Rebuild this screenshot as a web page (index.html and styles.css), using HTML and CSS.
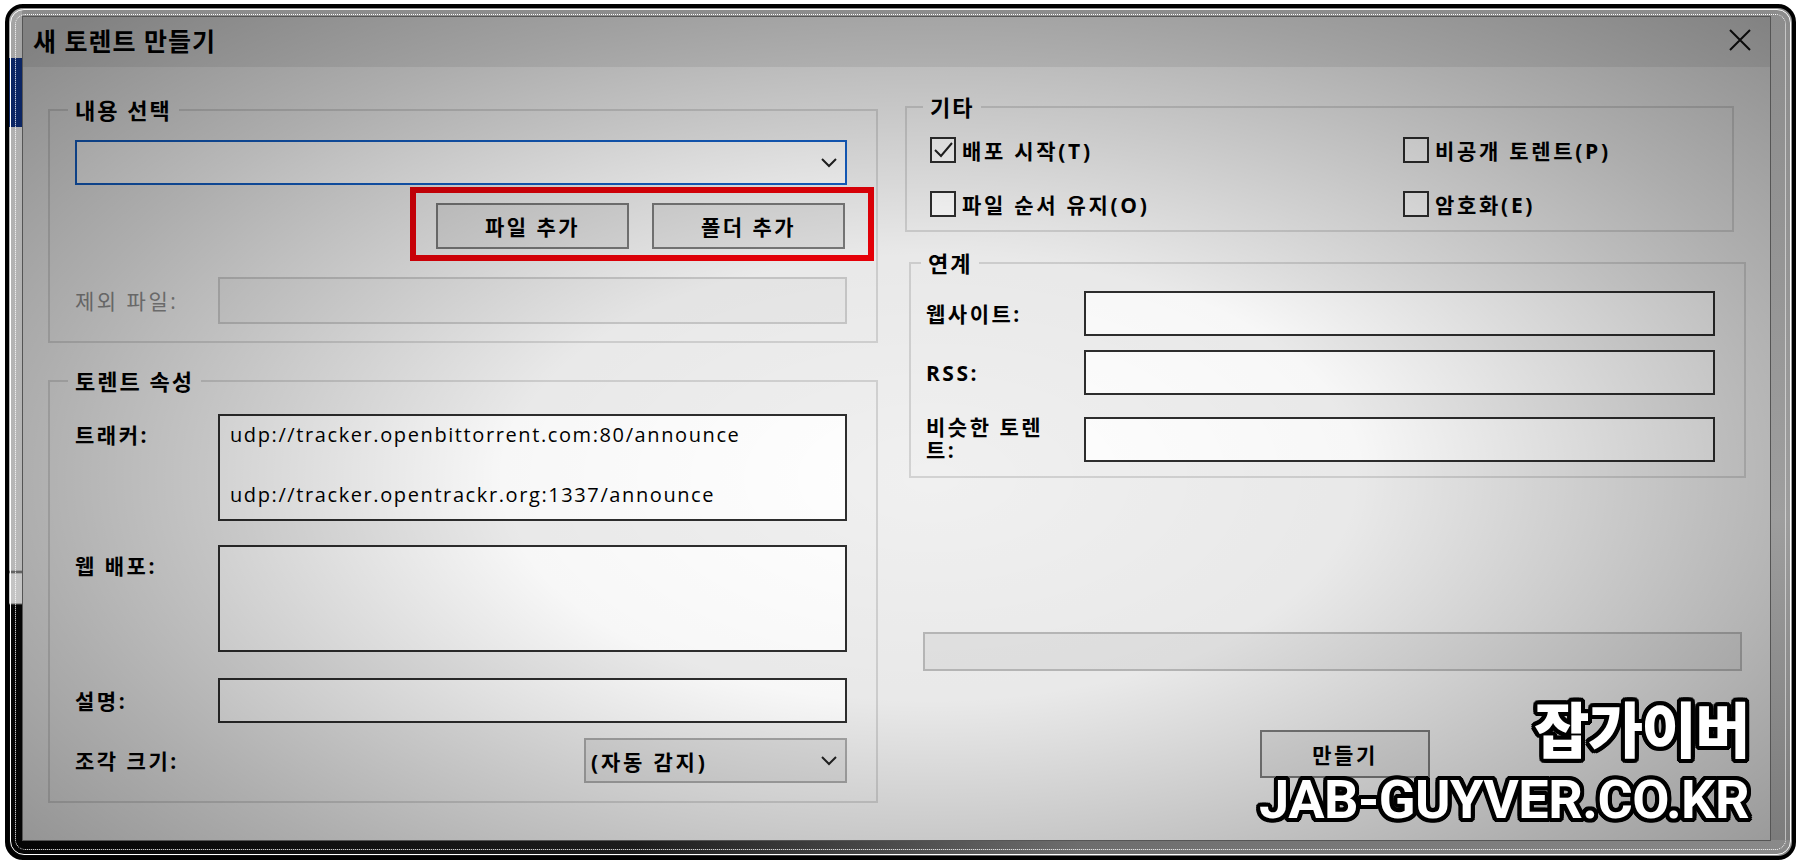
FILE: index.html
```html
<!DOCTYPE html>
<html lang="ko">
<head>
    <meta charset="UTF-8">
    <meta name="viewport" content="width=device-width, initial-scale=1.0">
    <title>새 토렌트 만들기</title>
    <link rel="stylesheet" href="styles.css">
</head>
<body>
    <div class="frame">
        <div class="dialog">
            <div class="titlebar">
                <span class="title">새 토렌트 만들기</span>
                <svg class="close" width="24" height="24" viewBox="0 0 24 24">
                    <path d="M2 2 L22 22 M22 2 L2 22" stroke="#111" stroke-width="2" fill="none"/>
                </svg>
            </div>

            <div class="content">
                <!-- 왼쪽 -->
                <div class="col">
                    <fieldset class="group">
                        <legend>내용 선택</legend>
                        <div class="group-body body-source">
                            <div class="combo">
                                <svg width="16" height="10" viewBox="0 0 16 10"><polyline points="1,1 8,8 15,1" fill="none" stroke="#222" stroke-width="2"/></svg>
                            </div>
                            <div class="add-buttons">
                                <button class="btn">파일 추가</button>
                                <button class="btn">폴더 추가</button>
                            </div>
                            <div class="row row-exclude">
                                <span class="label muted">제외 파일:</span>
                                <div class="input disabled"></div>
                            </div>
                        </div>
                    </fieldset>

                    <fieldset class="group group-props">
                        <legend>토렌트 속성</legend>
                        <div class="group-body body-props">
                            <div class="row row-top">
                                <span class="label">트래커:</span>
                                <div class="textarea trackers">udp://tracker.openbittorrent.com:80/announce<br><br>udp://tracker.opentrackr.org:1337/announce</div>
                            </div>
                            <div class="row row-top row-webseed">
                                <span class="label">웹 배포:</span>
                                <div class="textarea"></div>
                            </div>
                            <div class="row row-comment">
                                <span class="label">설명:</span>
                                <div class="input"></div>
                            </div>
                            <div class="row row-piece">
                                <span class="label">조각 크기:</span>
                                <div class="select">
                                    <span>(자동 감지)</span>
                                    <svg width="16" height="10" viewBox="0 0 16 10"><polyline points="1,1 8,8 15,1" fill="none" stroke="#222" stroke-width="2"/></svg>
                                </div>
                            </div>
                        </div>
                    </fieldset>
                </div>

                <!-- 오른쪽 -->
                <div class="col">
                    <fieldset class="group group-misc">
                        <legend>기타</legend>
                        <div class="group-body checks">
                            <label class="check"><span class="box"><svg width="22" height="22" viewBox="0 0 22 22"><path d="M3 11 L9 17 L20 4" fill="none" stroke="#222" stroke-width="2"/></svg></span>배포 시작(T)</label>
                            <label class="check"><span class="box"></span>비공개 토렌트(P)</label>
                            <label class="check"><span class="box"></span>파일 순서 유지(O)</label>
                            <label class="check"><span class="box"></span>암호화(E)</label>
                        </div>
                    </fieldset>

                    <fieldset class="group group-links">
                        <legend>연계</legend>
                        <div class="group-body body-links">
                            <div class="row link-row">
                                <span class="label">웹사이트:</span>
                                <div class="input"></div>
                            </div>
                            <div class="row link-row">
                                <span class="label">RSS:</span>
                                <div class="input"></div>
                            </div>
                            <div class="row link-row row-similar">
                                <span class="label label-wrap">비슷한 토렌트:</span>
                                <div class="input"></div>
                            </div>
                        </div>
                    </fieldset>

                    <div class="progress"></div>
                    <button class="btn btn-create">만들기</button>
                </div>
            </div>

            <div class="watermark">
                <div class="wm-ko">잡가이버</div>
                <div class="wm-en">JAB-GUYVER.CO.KR</div>
            </div>
        </div>
    </div>
</body>
</html>
```

FILE: styles.css
```css
* {
    box-sizing: border-box;
}
body {
    margin: 0;
    background: #fff;
    font-family: "Open Sans", "Noto Sans CJK KR", sans-serif;
    color: #000;
}

/* 캡처 테두리 */
.frame {
    position: relative;
    width: 1791px;
    height: 856px;
    margin: 4px 0 0 5px;
    padding: 8px 21px 15px 13px;
    border: 4px solid #000;
    border-radius: 18px;
    overflow: hidden;
    background:
        linear-gradient(to bottom, #a4a4a4 0, #a4a4a4 50px, #0b2563 50px, #0b2563 119px, #b0b0b0 119px, #b8b8b8 562px, #444 564px, #c4c4c4 566px, #c4c4c4 595px, #050505 597px, #050505 100%) left top / 13px 100% no-repeat,
        linear-gradient(to right, #050505, #1c1c1c 35%, #6d6d6d 60%, #8a8a8a) left bottom / 100% 16px no-repeat,
        linear-gradient(to bottom, #8c8c8c, #9e9e9e 60%, #7a7a7a);
}
.frame::before,
.frame::after {
    content: "";
    position: absolute;
    z-index: 3;
    pointer-events: none;
}
.frame::before {
    inset: 1px;
    border: 1px solid #fff;
    border-radius: 14px;
}
.frame::after {
    inset: 6px;
    border: 1px dotted #fff;
    border-radius: 10px;
}

/* 대화상자 */
.dialog {
    position: relative;
    height: 100%;
    display: flex;
    flex-direction: column;
    background: #f0f0f0;
    border: 1px solid #555;
    overflow: hidden;
}
.dialog::after {
    content: "";
    position: absolute;
    inset: 0;
    pointer-events: none;
    background: radial-gradient(ellipse 70% 78% at 52% 56%, rgba(0, 0, 0, 0) 0%, rgba(0, 0, 0, 0.03) 35%, rgba(0, 0, 0, 0.28) 75%, rgba(0, 0, 0, 0.42) 100%);
}
.titlebar {
    height: 50px;
    flex: none;
    display: flex;
    align-items: center;
    justify-content: space-between;
    padding: 0 18px 4px 10px;
    background: #dedede;
}
.title {
    font-size: 25px;
    font-weight: 700;
    letter-spacing: 1px;
}
.content {
    display: grid;
    grid-template-columns: 830px 847px;
    column-gap: 27px;
    padding: 28px 18px 0 25px;
}
.col {
    display: flex;
    flex-direction: column;
}

/* 그룹 상자 */
.group {
    margin: 0;
    padding: 0;
    min-width: 0;
    border: 2px solid #d2d2d2;
}
.group legend {
    margin-left: 18px;
    padding: 0 7px;
    font-size: 22px;
    font-weight: 700;
    line-height: 30px;
    letter-spacing: 2px;
}
.group-body {
    display: flex;
    flex-direction: column;
}
.body-source {
    padding: 15px 29px 17px 25px;
}
.group-props {
    margin-top: 23px;
}
.body-props {
    padding: 18px 29px 18px 25px;
}

.row {
    display: grid;
    grid-template-columns: 143px 1fr;
    align-items: center;
}
.row-top {
    align-items: start;
}
.row-top .label {
    padding-top: 6px;
}
.label {
    font-size: 21px;
    font-weight: 700;
    line-height: 30px;
    letter-spacing: 2.5px;
}
.muted {
    color: #8b8b8b;
    font-weight: 400;
}

/* 입력 상자 */
.combo {
    height: 45px;
    display: flex;
    align-items: center;
    justify-content: flex-end;
    padding-right: 8px;
    background: #fff;
    border: 2px solid #1461c9;
}
.input {
    height: 45px;
    background: #fff;
    border: 2px solid #2e2e2e;
}
.input.disabled {
    height: 47px;
    background: #ebebeb;
    border-color: #c9c9c9;
}
.textarea {
    height: 107px;
    background: #fff;
    border: 2px solid #2e2e2e;
}
.trackers {
    padding: 4px 10px;
    font-size: 20px;
    line-height: 30px;
    letter-spacing: 1.6px;
}
.select {
    width: 263px;
    height: 45px;
    justify-self: end;
    display: flex;
    align-items: center;
    justify-content: space-between;
    padding: 0 8px 0 5px;
    background: #e1e1e1;
    border: 2px solid #a9a9a9;
    font-size: 21px;
    font-weight: 700;
    letter-spacing: 2.8px;
}

.add-buttons {
    align-self: flex-end;
    display: flex;
    gap: 23px;
    margin: 2px -27px 0 0;
    padding: 10px 23px 6px 20px;
    border: 6px solid #ec0008;
}
.btn {
    width: 193px;
    height: 46px;
    padding: 0;
    background: #e1e1e1;
    border: 2px solid #7a7a7a;
    font-family: inherit;
    font-size: 21px;
    font-weight: 700;
    letter-spacing: 2.5px;
    color: #000;
}
.row-exclude {
    margin-top: 16px;
}
.row-webseed {
    margin-top: 24px;
}
.row-comment {
    margin-top: 26px;
}
.row-piece {
    margin-top: 15px;
}

/* 기타 */
.group-misc {
    margin: -3px 18px 0 0;
}
.group-misc legend {
    margin-left: 16px;
}
.checks {
    display: grid;
    grid-template-columns: 473px 1fr;
    row-gap: 28px;
    padding: 15px 0 13px 23px;
}
.check {
    display: flex;
    align-items: center;
    height: 26px;
    font-size: 21px;
    font-weight: 700;
    letter-spacing: 2.7px;
}
.box {
    width: 26px;
    height: 26px;
    flex: none;
    display: flex;
    align-items: center;
    justify-content: center;
    margin-right: 6px;
    background: #fff;
    border: 2px solid #2e2e2e;
}

/* 연계 */
.group-links {
    margin: 16px 6px 0 4px;
}
.group-links legend {
    margin-left: 10px;
}
.body-links {
    padding: 13px 29px 14px 15px;
}
.link-row {
    grid-template-columns: 158px 1fr;
}
.link-row + .link-row {
    margin-top: 14px;
}
.link-row.row-similar {
    margin-top: 21px;
}
.label-wrap {
    width: 140px;
    line-height: 23px;
}

.progress {
    height: 39px;
    margin: 154px 10px 0 18px;
    background: #e4e4e4;
    border: 2px solid #b9b9b9;
}
.btn-create {
    width: 170px;
    height: 48px;
    margin: 59px 0 0 355px;
}

/* 워터마크 */
.watermark {
    position: absolute;
    right: 21px;
    bottom: 10px;
    z-index: 2;
    text-align: right;
    color: #fff;
    font-weight: 900;
    text-shadow:
        4px 0 0 #000, -4px 0 0 #000, 0 4px 0 #000, 0 -4px 0 #000,
        3px 3px 0 #000, -3px 3px 0 #000, 3px -3px 0 #000, -3px -3px 0 #000,
        4px 2px 0 #000, -4px 2px 0 #000, 4px -2px 0 #000, -4px -2px 0 #000,
        2px 4px 0 #000, -2px 4px 0 #000, 2px -4px 0 #000, -2px -4px 0 #000;
}
.wm-ko {
    font-family: "Noto Sans CJK KR", sans-serif;
    font-size: 60px;
    line-height: 86px;
    letter-spacing: -1.5px;
}
.wm-en {
    font-family: Roboto, "Noto Sans", sans-serif;
    font-size: 54px;
    font-weight: 700;
    line-height: 60px;
    letter-spacing: -0.5px;
}
```
